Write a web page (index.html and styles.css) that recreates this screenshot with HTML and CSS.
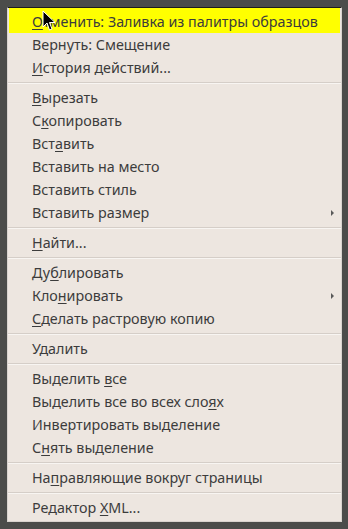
FILE: index.html
```html
<!DOCTYPE html>
<html>
	<head>
		<meta charset="utf-8" />
		<title>Правка</title>
		<link rel="stylesheet" href="styles.css">
	</head>
	<body>
		<div class="menu">
			<div class="item active"><u>О</u>тменить: Заливка из палитры образцов</div>
			<div class="item">Вернуть: Смещение</div>
			<div class="item"><u>И</u>стория действий...</div>
			<div class="sep"></div>
			<div class="item"><u>В</u>ырезать</div>
			<div class="item">С<u>к</u>опировать</div>
			<div class="item">Вст<u>а</u>вить</div>
			<div class="item">Вставить на место</div>
			<div class="item">Вставить стиль</div>
			<div class="item sub">Вставить размер</div>
			<div class="sep"></div>
			<div class="item"><u>Н</u>айти...</div>
			<div class="sep"></div>
			<div class="item">Ду<u>б</u>лировать</div>
			<div class="item sub">Кло<u>н</u>ировать</div>
			<div class="item"><u>С</u>делать растровую копию</div>
			<div class="sep"></div>
			<div class="item">Удалить</div>
			<div class="sep"></div>
			<div class="item">Выделить <u>в</u>се</div>
			<div class="item">Выделить все во всех сло<u>я</u>х</div>
			<div class="item">Инвертировать выделение</div>
			<div class="item">С<u>н</u>ять выделение</div>
			<div class="sep"></div>
			<div class="item">На<u>п</u>равляющие вокруг страницы</div>
			<div class="sep"></div>
			<div class="item">Редактор <u>X</u>ML...</div>
			<!-- курсор мыши поверх пункта -->
			<svg class="cursor" width="14" height="22" viewBox="0 0 14 22">
				<path d="M1 1 L1 17 L5 13 L7.5 20 L10 19 L7.5 12.5 L13 12.5 Z" fill="#000" stroke="#fff" stroke-width="1"/>
			</svg>
		</div>
	</body>
</html>
```

FILE: styles.css
```css
body{
	margin: 0;
	background: #4b4c4a;
	font-family: "Noto Sans", "DejaVu Sans", sans-serif;
}
.menu{
	position: relative;
	width: 333px;
	margin: 7px 0 0 7px;
	padding: 2px 0 2px;
	background: #ede6e0;
	border: 1px solid #d8d3ce;
	border-top-color: #1c1c1c;
}
.item{
	height: 23px;
	line-height: 23px;
	padding-left: 24px;
	font-size: 14.3px;
	color: #3c3c3c;
	white-space: nowrap;
	position: relative;
}
.item u{
	text-decoration: underline;
	text-underline-offset: 2px;
}
.item.active{
	background: #ffff00;
	margin-top: -2px;
	padding-top: 2px;
	margin-left: 1px;
	margin-right: 1px;
	padding-left: 23px;
}
.item.sub::after{
	content: "";
	position: absolute;
	right: 7px;
	top: 9px;
	border-left: 3px solid #5a5a5a;
	border-top: 3px solid transparent;
	border-bottom: 3px solid transparent;
}
.sep{
	height: 0;
	margin: 3px 0 2px;
	border-top: 1px solid #d5cec8;
	border-bottom: 1px solid #f8f5f2;
}
.cursor{
	position: absolute;
	left: 34px;
	top: 2px;
}
```
